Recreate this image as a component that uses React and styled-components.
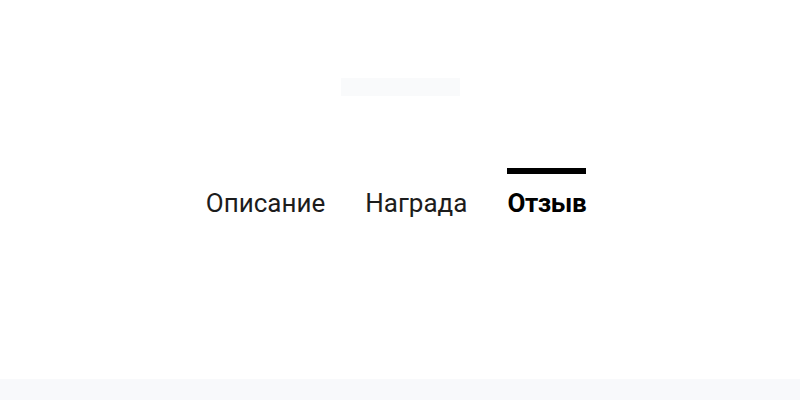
import React, { useState } from "react";
import styled, { createGlobalStyle } from "styled-components";

const GlobalStyle = createGlobalStyle`
  body {
    margin: 0;
    background: #ffffff;
    font-family: Roboto, "Noto Sans", sans-serif;
    color: #1c1c1c;
  }
`;

const Page = styled.div`
  width: 800px;
  height: 400px;
  display: flex;
  flex-direction: column;
  overflow: hidden;
`;

const Hero = styled.section`
  display: flex;
  flex-direction: column;
  align-items: center;
  padding-top: 78px;
  height: 379px;
  flex-shrink: 0;
  box-sizing: border-box;
`;

const Placeholder = styled.div`
  width: 119px;
  height: 18px;
  background: #f9fafb;
`;

const Tabs = styled.nav`
  display: flex;
  gap: 40px;
  margin-top: 72px;
  margin-right: 8px;
`;

const Tab = styled.button`
  border: none;
  background: none;
  padding: 14px 0 0;
  border-top: 6px solid ${(p) => (p.$active ? "#000000" : "transparent")};
  font-family: Roboto, "Noto Sans", sans-serif;
  font-size: 26px;
  line-height: 30px;
  font-weight: ${(p) => (p.$active ? 700 : 400)};
  letter-spacing: ${(p) => (p.$active ? "-0.4px" : "0")};
  color: ${(p) => (p.$active ? "#000000" : "#1c1c1c")};
  cursor: pointer;
`;

const Footer = styled.section`
  flex: 1;
  background: #f8f9fb;
`;

const tabs = ["Описание", "Награда", "Отзыв"];

export default function App() {
  const [active, setActive] = useState(2);
  return (
    <>
      <GlobalStyle />
      <Page>
        <Hero>
          <Placeholder />
          <Tabs>
            {tabs.map((t, i) => (
              <Tab key={t} $active={i === active} onClick={() => setActive(i)}>
                {t}
              </Tab>
            ))}
          </Tabs>
        </Hero>
        <Footer />
      </Page>
    </>
  );
}
